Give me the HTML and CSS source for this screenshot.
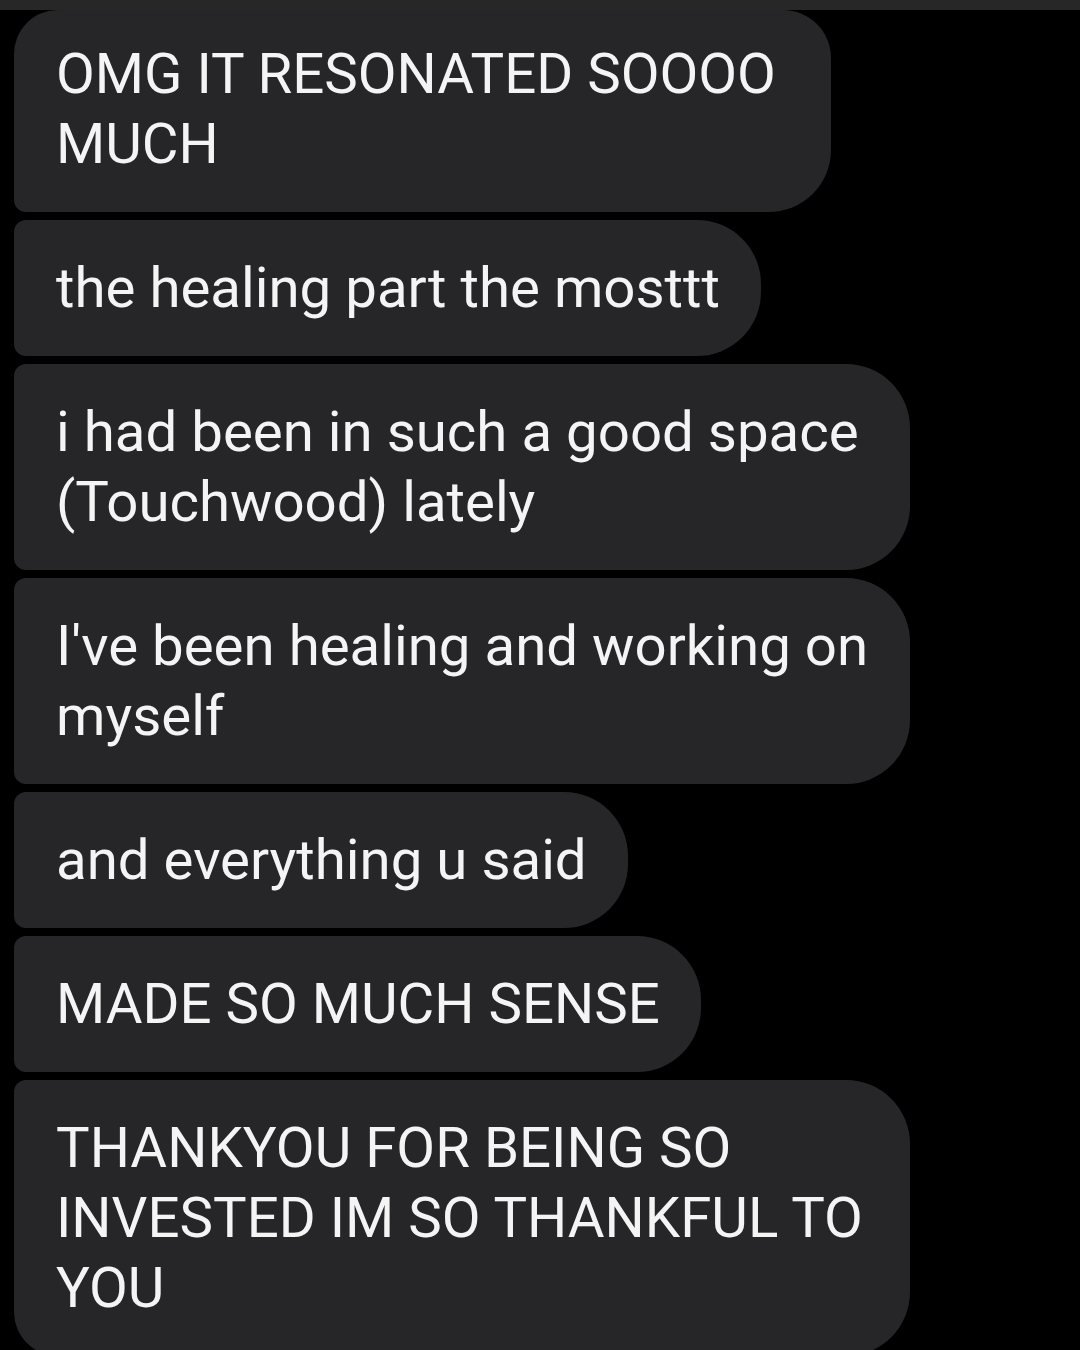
FILE: index.html
```html
<!DOCTYPE html>
<html>
<head>
<meta charset="utf-8">
<link rel="stylesheet" href="styles.css">
</head>
<body>
<div class="bar"></div>
<div class="thread">
  <div class="bubble first b1">OMG IT RESONATED SOOOO<br>MUCH</div>
  <div class="bubble">the healing part the mosttt</div>
  <div class="bubble wide">i had been in such a good space<br>(Touchwood) lately</div>
  <div class="bubble wide">I've been healing and working on<br>myself</div>
  <div class="bubble">and everything u said</div>
  <div class="bubble">MADE SO MUCH SENSE</div>
  <div class="bubble wide last">THANKYOU FOR BEING SO<br>INVESTED IM SO THANKFUL TO<br>YOU</div>
</div>
</body>
</html>
```
FILE: styles.css
```css
html, body {
  margin: 0;
  padding: 0;
  background: #000;
}
body {
  width: 1080px;
  height: 1350px;
  overflow: hidden;
  font-family: Roboto, "Noto Sans", sans-serif;
}
.bar {
  height: 10px;
  background: #272727;
}
.thread {
  display: flex;
  flex-direction: column;
  align-items: flex-start;
  gap: 8px;
  padding-left: 14px;
}
.bubble {
  box-sizing: border-box;
  background: #262628;
  color: #f4f4f4;
  font-size: 56.4px;
  line-height: 70px;
  padding: 33px 41px 33px 42px;
  border-radius: 12px 64px 64px 12px;
  white-space: nowrap;
}
.first {
  padding-top: 29px;
  border-radius: 44px 48px 62px 12px;
}
.b1 {
  width: 817px;
}
.wide {
  width: 896px;
}
.last {
  border-radius: 12px 64px 64px 44px;
}
```
